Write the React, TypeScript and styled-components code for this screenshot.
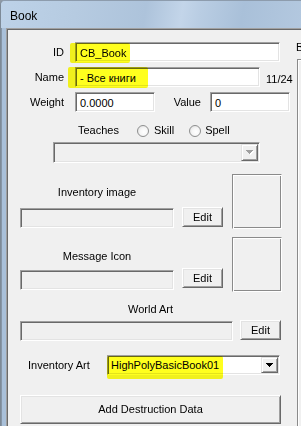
import React from 'react';
import styled, { createGlobalStyle } from 'styled-components';

const GlobalStyle = createGlobalStyle`
  html, body { margin: 0; padding: 0; }
  body {
    width: 301px; height: 426px; overflow: hidden; background: #8f9aa6;
    font-family: "Liberation Sans", Arial, sans-serif; font-size: 11px; color: #000;
  }
  * { box-sizing: border-box; }
`;

const Window = styled.div`
  width: 301px; height: 426px; display: flex; flex-direction: column; overflow: hidden;
  background: #a9c0d9; border-left: 1px solid #7d8a97; border-top: 1px solid #8d9cad;
  border-top-left-radius: 5px;
`;

const TitleBar = styled.div`
  height: 27px; flex: none; padding: 8px 0 0 9px; font-size: 12px; line-height: 14px;
  background: linear-gradient(100deg, #bdd2e8 0%, #b6cbe1 25%, #adc3db 48%, #c3d5e9 60%, #b9cde3 66%, #a9c0d9 80%, #b3c8df 100%);
`;

const Body = styled.div`
  display: flex; flex: 1; min-height: 0;
`;

const FrameEdge = styled.div`
  width: 5px; flex: none; background: #a9c0d9; border-left: 1px solid #8796a6;
`;

const Client = styled.div`
  flex: 1; display: flex; background: #f0f0f0; padding: 1px 0 0 1px;
  border-top: 1px solid #a0a0a0; border-left: 1px solid #a0a0a0;
  box-shadow: inset 1px 1px 0 #696969;
`;

const MainColumn = styled.div`
  width: 287px; flex: none; display: flex; flex-direction: column;
`;

const SideColumn = styled.div`
  flex: 1; display: flex; flex-direction: column; padding-left: 1px; min-width: 0;
`;

const SideLabel = styled.div`
  margin-top: 11px; line-height: 13px; white-space: nowrap;
`;

const SideBox = styled.div`
  flex: 1; margin-top: 5px; margin-left: 1px;
  border-top: 1px solid #8a8a8a; border-left: 1px solid #8a8a8a;
  box-shadow: inset 1px 1px 0 #fff;
`;

const Row = styled.div<{ $mt: number; $ml?: number; $h?: number; $align?: string }>`
  display: flex; align-items: ${p => p.$align ?? 'center'};
  margin-top: ${p => p.$mt}px; margin-left: ${p => p.$ml ?? 0}px;
  height: ${p => (p.$h ? `${p.$h}px` : 'auto')};
  flex: none;
`;

const Label = styled.span<{ $w?: number; $align?: string; $mr?: number; $ml?: number; $mt?: number }>`
  display: block; line-height: 13px; white-space: nowrap; flex: none;
  width: ${p => (p.$w ? `${p.$w}px` : 'auto')};
  text-align: ${p => p.$align ?? 'left'};
  margin-right: ${p => p.$mr ?? 0}px; margin-left: ${p => p.$ml ?? 0}px;
  margin-top: ${p => p.$mt ?? 0}px;
`;

const TextBox = styled.div<{ $w: number; $disabled?: boolean; $mt?: number }>`
  position: relative; flex: none;
  width: ${p => p.$w}px; height: 20px; margin-top: ${p => p.$mt ?? 0}px;
  background: ${p => (p.$disabled ? '#f0f0f0' : '#fff')};
  border: 1px solid; border-color: #a0a0a0 #fff #fff #a0a0a0;
  box-shadow: inset 1px 1px 0 #696969, inset -1px -1px 0 #e3e3e3;
  padding: 4px 0 0 4px; line-height: 13px; white-space: nowrap;
`;

const Combo = styled.div<{ $w: number; $h: number; $disabled?: boolean }>`
  position: relative; flex: none; display: flex; align-items: stretch;
  width: ${p => p.$w}px; height: ${p => p.$h}px;
  background: ${p => (p.$disabled ? '#f0f0f0' : '#fff')};
  border: 1px solid; border-color: #a0a0a0 #fff #fff #a0a0a0;
  box-shadow: inset 1px 1px 0 #696969, inset -1px -1px 0 #e3e3e3;
  padding: 1px;
`;

const ComboText = styled.span`
  flex: 1; padding: 2px 0 0 2px; line-height: 13px; white-space: nowrap;
`;

const DropButton = styled.span<{ $w: number }>`
  width: ${p => p.$w}px; flex: none; display: flex; align-items: center; justify-content: center;
  background: #f0f0f0;
  border: 1px solid; border-color: #e3e3e3 #696969 #696969 #e3e3e3;
  box-shadow: inset 1px 1px 0 #fff, inset -1px -1px 0 #a0a0a0;
`;

const Highlight = styled.span<{ $l: number; $t: number; $w: number; $h: number }>`
  position: absolute; left: ${p => p.$l}px; top: ${p => p.$t}px;
  width: ${p => p.$w}px; height: ${p => p.$h}px;
  background: #ffff1e; mix-blend-mode: multiply; border-radius: 2px;
  pointer-events: none;
`;

const PushButton = styled.button<{ $w: number; $h: number; $mt?: number; $ml?: number }>`
  flex: none; width: ${p => p.$w}px; height: ${p => p.$h}px;
  margin-top: ${p => p.$mt ?? 0}px; margin-left: ${p => p.$ml ?? 0}px;
  background: #f0f0f0; padding: 0; color: #000;
  font-family: inherit; font-size: 11px; line-height: 13px;
  border: 1px solid; border-color: #fff #696969 #696969 #fff;
  box-shadow: inset 1px 1px 0 #e3e3e3, inset -1px -1px 0 #a0a0a0;
`;

const ImageFrame = styled.div<{ $h: number }>`
  width: 50px; height: ${p => p.$h}px; flex: none;
  border: 1px solid; border-color: #8a8a8a #fff #fff #8a8a8a;
  box-shadow: inset 1px 1px 0 #fff, inset -1px -1px 0 #8a8a8a;
`;

const Radio = styled.span`
  width: 12px; height: 12px; flex: none; border-radius: 50%;
  border: 1px solid #8e8f8f;
  background: radial-gradient(circle at 60% 60%, #ffffff 0%, #f6f6f6 45%, #d9d9d9 100%);
`;

const Section = styled.div<{ $mt: number }>`
  display: flex; margin-top: ${p => p.$mt}px; margin-left: 12px; flex: none;
`;

const SectionMain = styled.div`
  width: 203px; margin-right: 9px; display: flex; flex-direction: column;
`;

const Controls = styled.div<{ $mt: number }>`
  display: flex; align-items: flex-start; gap: 8px; margin-top: ${p => p.$mt}px;
`;

const Arrow = ({ color, shadow }: { color: string; shadow?: boolean }) => (
  <svg width="8" height="5" viewBox="0 0 8 5" style={{ display: 'block' }}>
    {shadow && <path d="M1 1h7v1H1zM2 2h5v1H2zM3 3h3v1H3zM4 4h1v1H4z" fill="#fff" />}
    <path d="M0 0h7v1H0zM1 1h5v1H1zM2 2h3v1H2zM3 3h1v1H3z" fill={color} />
  </svg>
);

export default function App() {
  return (
    <>
      <GlobalStyle />
      <Window>
        <TitleBar>Book</TitleBar>
        <Body>
          <FrameEdge />
          <Client>
            <MainColumn>
              <Row $mt={12} $h={20}>
                <Label $w={56} $align="right" $mr={11}>ID</Label>
                <TextBox $w={205}>
                  CB_Book
                  <Highlight $l={-6} $t={0} $w={60} $h={20} />
                </TextBox>
              </Row>
              <Row $mt={5} $h={20}>
                <Label $w={56} $align="right" $mr={11}>Name</Label>
                <TextBox $w={185}>
                  - Все книги
                  <Highlight $l={-8} $t={-1} $w={80} $h={21} />
                </TextBox>
                <Label $ml={6} $mt={5}>11/24</Label>
              </Row>
              <Row $mt={5} $h={20}>
                <Label $w={56} $align="right" $mr={11}>Weight</Label>
                <TextBox $w={80}>0.0000</TextBox>
                <Label $w={36} $ml={10} $mr={9} $align="right">Value</Label>
                <TextBox $w={80}>0</TextBox>
              </Row>
              <Row $mt={12} $h={13} $ml={70}>
                <Label $mr={18}>Teaches</Label>
                <Radio />
                <Label $ml={5} $mr={15}>Skill</Label>
                <Radio />
                <Label $ml={4}>Spell</Label>
              </Row>
              <Row $mt={5} $ml={45}>
                <Combo $w={207} $h={21} $disabled>
                  <ComboText />
                  <DropButton $w={17}>
                    <Arrow color="#a0a0a0" shadow />
                  </DropButton>
                </Combo>
              </Row>
              <Section $mt={11}>
                <SectionMain>
                  <Label $w={154} $align="center" $mt={12}>Inventory image</Label>
                  <Controls $mt={8}>
                    <TextBox $w={154} $disabled $mt={1} />
                    <PushButton $w={41} $h={20}>Edit</PushButton>
                  </Controls>
                </SectionMain>
                <ImageFrame $h={55} />
              </Section>
              <Section $mt={8}>
                <SectionMain>
                  <Label $w={154} $align="center" $mt={13}>Message Icon</Label>
                  <Controls $mt={5}>
                    <TextBox $w={154} $disabled $mt={2} />
                    <PushButton $w={41} $h={20}>Edit</PushButton>
                  </Controls>
                </SectionMain>
                <ImageFrame $h={55} />
              </Section>
              <Row $mt={11} $ml={12}>
                <Label $w={261} $align="center">World Art</Label>
              </Row>
              <Row $mt={4} $ml={12} $align="flex-start">
                <TextBox $w={213} $disabled $mt={1} />
                <PushButton $w={41} $h={20} $ml={7}>Edit</PushButton>
              </Row>
              <Row $mt={14} $ml={20} $h={20}>
                <Label $w={79}>Inventory Art</Label>
                <Combo $w={173} $h={20}>
                  <ComboText>HighPolyBasicBook01</ComboText>
                  <DropButton $w={17}>
                    <Arrow color="#000" />
                  </DropButton>
                  <Highlight $l={-1} $t={0} $w={116} $h={23} />
                </Combo>
              </Row>
              <Row $mt={20} $ml={12}>
                <PushButton $w={261} $h={29}>Add Destruction Data</PushButton>
              </Row>
            </MainColumn>
            <SideColumn>
              <SideLabel>B</SideLabel>
              <SideBox />
            </SideColumn>
          </Client>
        </Body>
      </Window>
    </>
  );
}
